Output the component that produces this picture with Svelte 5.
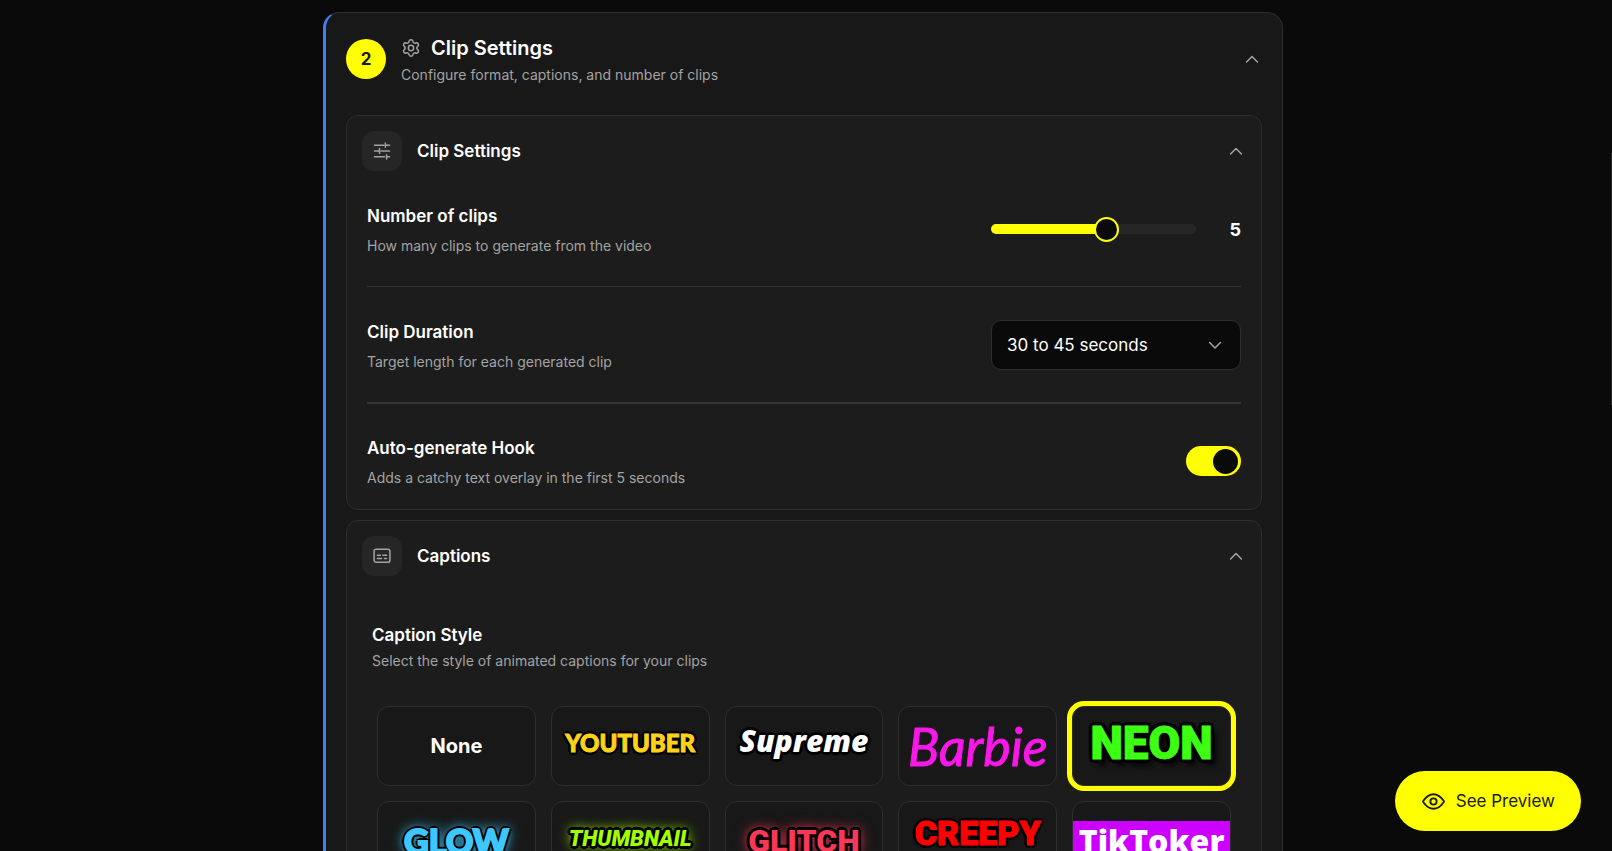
<script>
  let clips = $state(5);
  let duration = $state('30 to 45 seconds');
  let hook = $state(true);
  let selected = $state('NEON');

  const minClips = 1;
  const maxClips = 8;
  const fill = $derived(((clips - minClips) / (maxClips - minClips)) * 100);

  const durations = ['Under 30 seconds', '30 to 45 seconds', '45 to 60 seconds', '60 to 90 seconds'];

  const styles = [
    { name: 'None', look: 'none' },
    { name: 'YOUTUBER', look: 'youtuber' },
    { name: 'Supreme', look: 'supreme' },
    { name: 'Barbie', look: 'barbie' },
    { name: 'NEON', look: 'neon' },
    { name: 'GLOW', look: 'glow' },
    { name: 'THUMBNAIL', look: 'thumbnail' },
    { name: 'GLITCH', look: 'glitch' },
    { name: 'CREEPY', look: 'creepy' },
    { name: 'TikToker', look: 'tiktoker' }
  ];
</script>

{#snippet chevronUp()}
  <svg class="chevron" viewBox="0 0 24 24" aria-hidden="true"><path d="M18.500 15.500 12 9l-6.500 6.500" /></svg>
{/snippet}

<main>
  <section class="step">
    <button class="step-head">
      <span class="badge">2</span>
      <span class="step-text">
        <span class="step-title">
          <svg class="gear" viewBox="0 0 24 24" aria-hidden="true">
            <path d="M9.671 4.136a2.340 2.340 0 0 1 4.659 0 2.340 2.340 0 0 0 3.319 1.915 2.340 2.340 0 0 1 2.330 4.033 2.340 2.340 0 0 0 0 3.831 2.340 2.340 0 0 1-2.330 4.033 2.340 2.340 0 0 0-3.319 1.915 2.340 2.340 0 0 1-4.659 0 2.340 2.340 0 0 0-3.320-1.915 2.340 2.340 0 0 1-2.330-4.033 2.340 2.340 0 0 0 0-3.831A2.340 2.340 0 0 1 6.350 6.051a2.340 2.340 0 0 0 3.319-1.915" />
            <circle cx="12" cy="12" r="3.200" />
          </svg>
          Clip Settings
        </span>
        <span class="hint">Configure format, captions, and number of clips</span>
      </span>
      {@render chevronUp()}
    </button>

    <div class="panels">
      <section class="panel">
        <button class="panel-head">
          <span class="tile">
            <svg viewBox="0 0 24 24" aria-hidden="true">
              <path d="M3 5h11M16 5h5M16 2.500v5M3 12h5M11 12h10M9 9v6M3 19h12M17.500 19h3.500M17.500 16.500v5" />
            </svg>
          </span>
          <span class="panel-title">Clip Settings</span>
          {@render chevronUp()}
        </button>
        <div class="rows">
          <div class="row">
            <div class="label">
              <label for="clips">Number of clips</label>
              <span class="hint">How many clips to generate from the video</span>
            </div>
            <div class="slider">
              <input
                id="clips"
                type="range"
                min={minClips}
                max={maxClips}
                bind:value={clips}
                style="--fill: {fill}%"
              />
              <output for="clips">{clips}</output>
            </div>
          </div>
          <div class="row">
            <div class="label">
              <label for="duration">Clip Duration</label>
              <span class="hint">Target length for each generated clip</span>
            </div>
            <div class="select">
              <select id="duration" bind:value={duration}>
                {#each durations as d}
                  <option>{d}</option>
                {/each}
              </select>
              <svg class="chevron" viewBox="0 0 24 24" aria-hidden="true"><path d="M5.500 9l6.500 6.500L18.500 9" /></svg>
            </div>
          </div>
          <div class="row">
            <div class="label">
              <label for="hook">Auto-generate Hook</label>
              <span class="hint">Adds a catchy text overlay in the first 5 seconds</span>
            </div>
            <input id="hook" class="toggle" type="checkbox" role="switch" bind:checked={hook} />
          </div>
        </div>
      </section>

      <section class="panel">
        <button class="panel-head">
          <span class="tile">
            <svg viewBox="0 0 24 24" aria-hidden="true">
              <rect x="2.500" y="4" width="19" height="15.500" rx="2.500" />
              <path d="M6.500 11h3.500M13 11h4.500M6.500 15h5M15 15h2.500" />
            </svg>
          </span>
          <span class="panel-title">Captions</span>
          {@render chevronUp()}
        </button>
        <div class="captions">
          <div class="captions-text">
            <h3>Caption Style</h3>
            <p class="hint">Select the style of animated captions for your clips</p>
          </div>
          <div class="grid">
            {#each styles as s}
              <button
                class="option"
                class:selected={selected === s.name}
                aria-pressed={selected === s.name}
                onclick={() => (selected = s.name)}
              >
                <span class="look {s.look}">{s.name}</span>
              </button>
            {/each}
          </div>
        </div>
      </section>
    </div>
  </section>

  <div class="thumb"></div>

  <button class="preview">
    <svg viewBox="0 0 24 24" aria-hidden="true">
      <path d="M21.544 11.045c.304.426.456.640.456.955s-.152.529-.456.955C20.178 14.871 16.689 19 12 19s-8.178-4.130-9.544-6.045C2.152 12.529 2 12.315 2 12s.152-.529.456-.955C3.822 9.129 7.311 5 12 5s8.178 4.130 9.544 6.045Z" />
      <circle cx="12" cy="12" r="3" />
    </svg>
    See Preview
  </button>
</main>

<style>
  :global(body) {
    margin: 0;
    background: #0a0a0a;
  }

  * {
    box-sizing: border-box;
  }

  main {
    height: 100vh;
    overflow-y: auto;
    scrollbar-width: none;
    padding: 12px 6px 0 0;
    background: #0a0a0a;
    color: #fff;
    font-family: Inter, 'Liberation Sans', sans-serif;
    font-size: 17px;
  }

  button {
    border: 0;
    padding: 0;
    background: none;
    color: inherit;
    font: inherit;
    text-align: left;
    cursor: pointer;
  }

  svg {
    flex: none;
    fill: none;
    stroke: #a3a3a3;
    stroke-width: 1.800;
    stroke-linecap: round;
    stroke-linejoin: round;
  }

  .chevron {
    width: 20px;
    height: 20px;
    margin-left: auto;
  }

  .step {
    max-width: 960px;
    margin: 0 auto;
    padding-bottom: 20px;
    border: 1px solid #2e2e2e;
    border-left: 3px solid #3b82f6;
    border-radius: 16px;
    background: #181818;
  }

  .step-head {
    display: flex;
    align-items: center;
    gap: 15px;
    width: 100%;
    padding: 19px 20px 20px;
  }

  .badge {
    display: grid;
    place-items: center;
    width: 40px;
    height: 40px;
    border-radius: 50%;
    background: #ff0;
    color: #181818;
    font-weight: 700;
  }

  .step-text {
    display: grid;
  }

  .step-title {
    display: flex;
    align-items: center;
    gap: 10px;
    font-size: 20px;
    font-weight: 600;
    line-height: 32px;
  }

  .gear {
    width: 20px;
    height: 20px;
  }

  .hint {
    margin: 0;
    color: #a3a3a3;
    font-size: 14px;
    line-height: 22px;
  }

  .panels {
    display: grid;
    gap: 10px;
    padding: 9px 20px 0;
  }

  .panel {
    border: 1px solid #2e2e2e;
    border-radius: 12px;
    background: #1c1c1c;
  }

  .panel-head {
    display: flex;
    align-items: center;
    gap: 15px;
    width: 100%;
    padding: 15px;
  }

  .tile {
    display: grid;
    place-items: center;
    width: 40px;
    height: 40px;
    border-radius: 12px;
    background: #262626;
  }

  .tile svg {
    width: 20px;
    height: 20px;
  }

  .panel-title,
  label,
  h3 {
    margin: 0;
    font-size: 17px;
    font-weight: 600;
    line-height: 30px;
  }

  .rows {
    padding: 15px 20px 20px;
  }

  .row {
    display: flex;
    align-items: center;
    justify-content: space-between;
    padding: 30px 0 29px;
  }

  .row:first-child {
    padding-top: 0;
  }

  .row + .row {
    border-top: 1px solid #333;
  }

  .row:last-child {
    padding: 29px 0 0;
    border-top-width: 2px;
  }

  .label {
    display: grid;
    gap: 4px;
  }

  .slider {
    display: flex;
    align-items: center;
    justify-content: space-between;
    width: 250px;
  }

  output {
    font-size: 18px;
    font-weight: 700;
  }

  input[type='range'] {
    appearance: none;
    width: 205px;
    height: 10px;
    margin: 0;
    border-radius: 5px;
    background: linear-gradient(to right, #ff0 var(--fill), #262626 var(--fill));
  }

  input[type='range']::-webkit-slider-thumb {
    appearance: none;
    box-sizing: border-box;
    width: 25px;
    height: 25px;
    border: 2px solid #ff0;
    border-radius: 50%;
    background: #0a0a0a;
  }

  .select {
    position: relative;
    width: 250px;
  }

  select {
    appearance: none;
    width: 100%;
    height: 50px;
    padding: 0 45px 0 15px;
    border: 1px solid #2e2e2e;
    border-radius: 10px;
    background: #0a0a0a;
    color: #fff;
    font: inherit;
  }

  .select .chevron {
    position: absolute;
    top: 15px;
    right: 16px;
    pointer-events: none;
  }

  .toggle {
    appearance: none;
    display: flex;
    align-items: center;
    width: 55px;
    height: 30px;
    margin: 0;
    padding: 0 3px;
    border-radius: 15px;
    background: #333;
  }

  .toggle::before {
    content: '';
    width: 25px;
    height: 25px;
    border-radius: 50%;
    background: #0a0a0a;
  }

  .toggle:checked {
    justify-content: flex-end;
    background: #ff0;
  }

  .captions {
    display: grid;
    gap: 34px;
    padding: 29px 25px 30px;
  }

  .captions-text {
    display: grid;
  }

  .grid {
    display: grid;
    grid-template-columns: repeat(5, 1fr);
    gap: 15px;
    padding: 0 5px;
  }

  .option {
    display: flex;
    align-items: center;
    justify-content: center;
    min-width: 0;
    height: 80px;
    overflow: hidden;
    border: 1px solid #2e2e2e;
    border-radius: 12px;
    background: #181818;
  }

  .option.selected {
    box-shadow: 0 0 0 5px #ff0;
  }

  .look {
    --glow: transparent;
    line-height: 40px;
    white-space: nowrap;
    -webkit-text-stroke: 2px currentColor;
    text-shadow:
      3px 0 #000,
      -3px 0 #000,
      0 3px #000,
      0 -3px #000,
      2px 2px #000,
      -2px 2px #000,
      2px -2px #000,
      -2px -2px #000,
      0 0 10px var(--glow),
      0 0 15px var(--glow);
  }

  .none {
    font-size: 20px;
    font-weight: 700;
    text-shadow: none;
    -webkit-text-stroke: 0;
  }

  .youtuber {
    padding-bottom: 6px;
    color: #ffd21a;
    font-family: Lato, sans-serif;
    font-size: 24px;
    font-weight: 900;
    -webkit-text-stroke: 1px currentColor;
  }

  .supreme {
    padding-bottom: 10px;
    color: #fff;
    font-family: 'Open Sans', sans-serif;
    font-size: 30px;
    font-style: italic;
    font-weight: 800;
    -webkit-text-stroke: 0;
  }

  .barbie {
    color: #f818e8;
    font-family: Lato, cursive;
    font-size: 52px;
    font-style: italic;
    font-weight: 400;
    text-shadow: none;
    -webkit-text-stroke: 1px currentColor;
  }

  .neon {
    padding-bottom: 6px;
    color: #3cff14;
    font-family: Roboto, sans-serif;
    font-size: 46px;
    font-weight: 900;
    text-shadow:
      4px 0 #000,
      -4px 0 #000,
      0 4px #000,
      0 -4px #000,
      3px 3px #000,
      -3px 3px #000,
      3px -3px #000,
      -3px -3px #000,
      5px 6px 6px #000;
    -webkit-text-stroke: 1px currentColor;
  }

  .glow {
    --glow: #3cc8ff;
    color: #3cc8ff;
    font-family: Lato, sans-serif;
    font-size: 34px;
    font-weight: 900;
  }

  .thumbnail {
    --glow: #a0ff00;
    padding-bottom: 4px;
    color: #a0ff00;
    font-family: Roboto, sans-serif;
    font-size: 22px;
    font-style: italic;
    font-weight: 900;
    -webkit-text-stroke: 0;
  }

  .glitch {
    --glow: #f83858;
    color: #f83858;
    font-family: Roboto, sans-serif;
    font-size: 32px;
    font-weight: 900;
    -webkit-text-stroke: 0;
  }

  .creepy {
    padding-bottom: 16px;
    color: #f00;
    font-family: Roboto, sans-serif;
    font-size: 34px;
    font-weight: 900;
    -webkit-text-stroke: 1px currentColor;
  }

  .tiktoker {
    flex: 1;
    background: #cc00ff;
    color: #fff;
    font-family: 'Open Sans', sans-serif;
    font-size: 32px;
    font-weight: 800;
    text-align: center;
    text-shadow: none;
    -webkit-text-stroke: 0;
  }

  .thumb {
    position: fixed;
    top: 18%;
    right: 0;
    width: 1px;
    height: 252px;
    background: #262626;
  }

  .preview {
    position: fixed;
    right: 31px;
    bottom: 20px;
    display: flex;
    align-items: center;
    gap: 10px;
    height: 60px;
    padding: 0 26px;
    border-radius: 30px;
    background: #ff0;
    color: #1a1a1a;
  }

  .preview svg {
    width: 25px;
    height: 25px;
    stroke: #1a1a1a;
  }
</style>
